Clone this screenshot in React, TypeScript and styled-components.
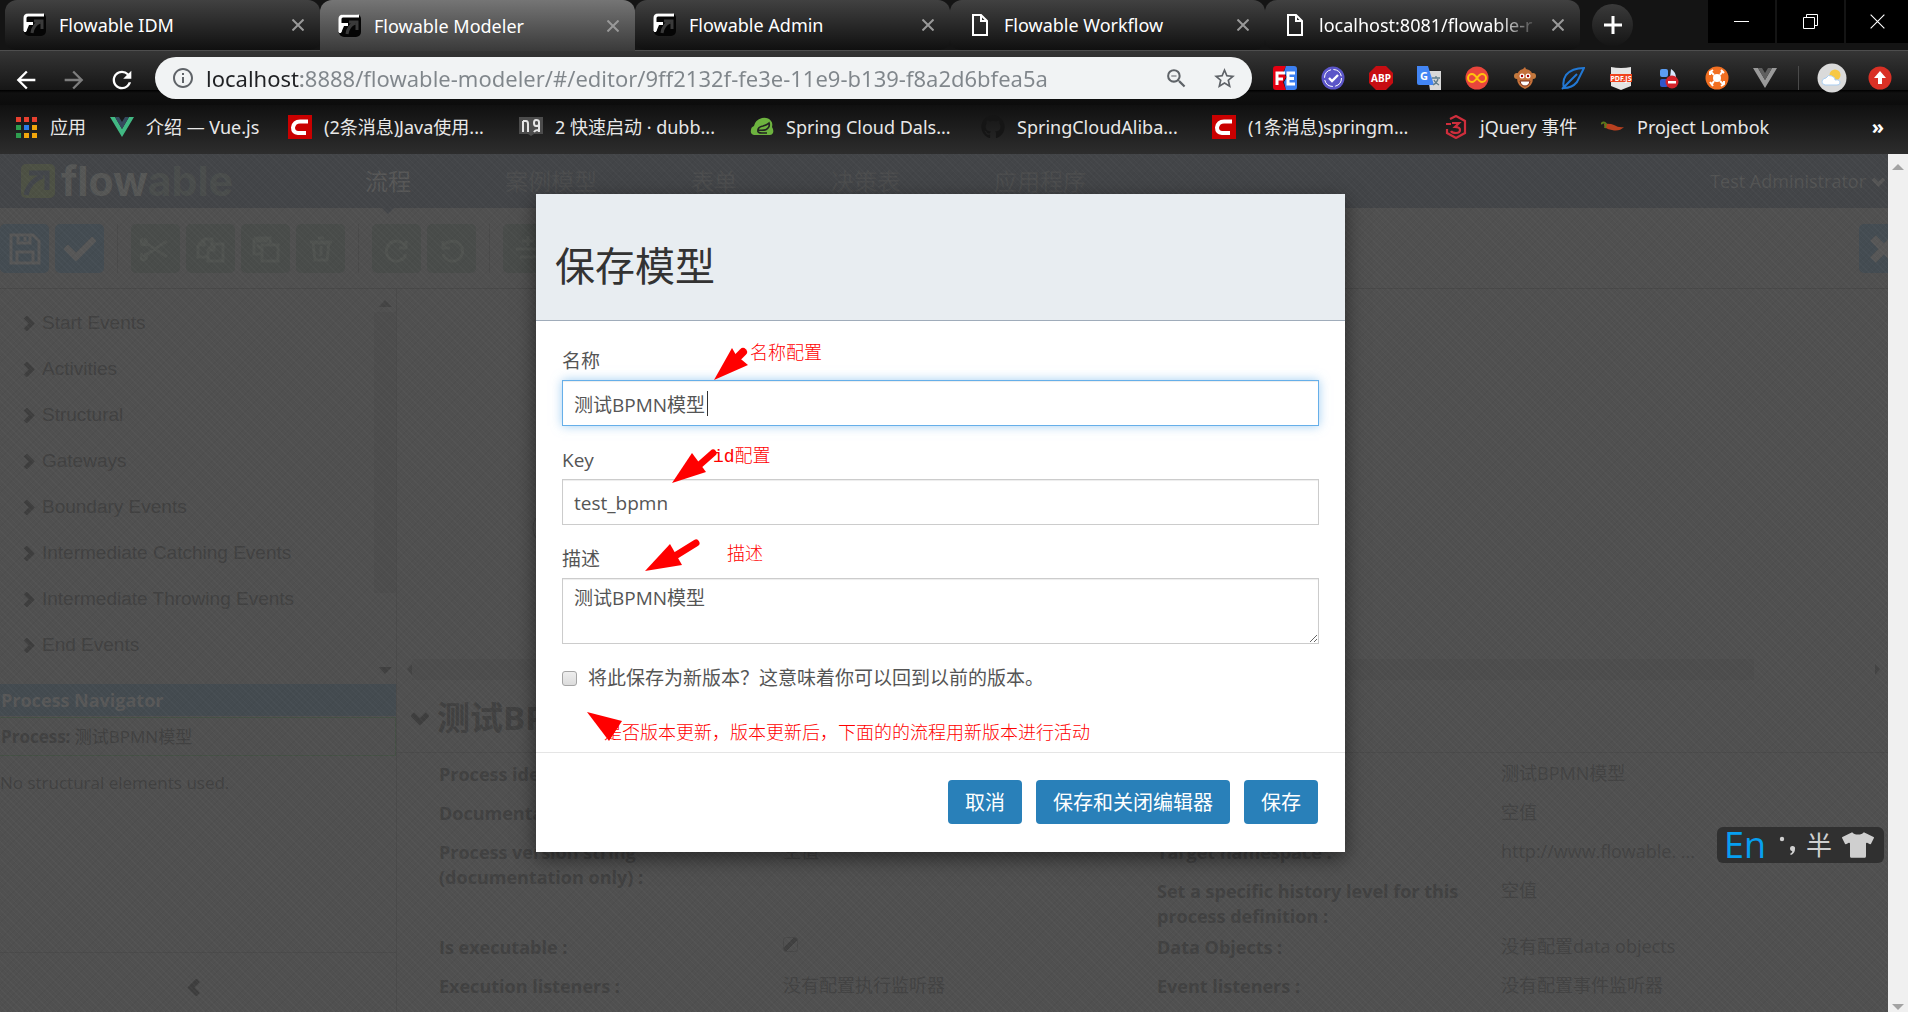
import React from "react";
import styled, { createGlobalStyle } from "styled-components";
import {
  MdArrowBack,
  MdArrowForward,
  MdRefresh,
  MdInfoOutline,
  MdZoomOut,
  MdStarBorder,
} from "react-icons/md";
import { FaGithub, FaCheck, FaTshirt } from "react-icons/fa";

const ui = `"Noto Sans", "Noto Sans CJK SC", sans-serif`;
const web = `"Open Sans", "Noto Sans CJK SC", sans-serif`;
const ink = "#414141";

const Global = createGlobalStyle`
  *, *::before, *::after { box-sizing: border-box; }
  body { margin: 0; background: #505050; overflow: hidden; }
  button, input, textarea { font: inherit; color: inherit; margin: 0; }
  button { border: 0; padding: 0; background: none; }
  a { color: inherit; text-decoration: none; }
  svg { display: block; flex: none; }
`;

const Browser = styled.div`
  display: flex;
  flex-direction: column;
  height: 100vh;
  font-family: ${ui};
`;

/* ---------- tab strip ---------- */

const TabStrip = styled.div`
  display: flex;
  height: 51px;
  padding-left: 5px;
  background: #141414;
  border-bottom: 1px solid #4e4e4e;
`;

const Tab = styled.div<{ $active?: boolean }>`
  display: flex;
  align-items: center;
  flex: 0 1 315px;
  min-width: 0;
  height: ${(p) => (p.$active ? 51 : 50)}px;
  padding: 0 16px 0 18px;
  gap: 12px;
  color: #fff;
  font-size: 18px;
  line-height: 24px;
  border-radius: ${(p) => (p.$active ? "12px 12px 0 0" : "12px 12px 10px 10px")};
  background: ${(p) =>
    p.$active
      ? "linear-gradient(#757575, #3a3a3a)"
      : "linear-gradient(#414141, #101010)"};
`;

const TabTitle = styled.span<{ $fade?: boolean }>`
  flex: 1;
  min-width: 0;
  overflow: hidden;
  white-space: nowrap;
  mask-image: ${(p) =>
    p.$fade ? "linear-gradient(90deg, #000 80%, transparent)" : "none"};
`;

const NewTab = styled.button`
  display: grid;
  place-items: center;
  width: 41px;
  height: 42px;
  margin: 4px 0 0 12px;
  border-radius: 50%;
  background: linear-gradient(#3a3a3a, #151515);
`;

const WindowButtons = styled.div`
  display: flex;
  gap: 2px;
  margin-left: auto;
`;

const WindowButton = styled.button`
  display: grid;
  place-items: center;
  width: 67px;
  height: 43px;
  background: #000;

  &:last-child { width: 62px; }
`;

/* ---------- address row ---------- */

const AddressRow = styled.div`
  display: flex;
  align-items: center;
  height: 54px;
  padding: 0 16px 0 12px;
  background: linear-gradient(#353535, #161616 39px, #000 39px, #101010 42px, #0c0c0c);
`;

const NavButton = styled.button<{ $dim?: boolean }>`
  display: grid;
  place-items: center;
  width: 24px;
  height: 24px;
  margin-right: 24px;
  color: ${(p) => (p.$dim ? "#7d7d7d" : "#fff")};
`;

const Omnibox = styled.div`
  display: flex;
  align-items: center;
  flex: 1;
  height: 42px;
  margin-right: 21px;
  margin-left: -1px;
  padding: 0 16px;
  border-radius: 21px;
  background: #f1f3f4;
  color: #5f6368;
`;

const Url = styled.input`
  flex: 1;
  min-width: 0;
  height: 32px;
  margin: 0 16px 0 11px;
  padding: 0;
  border: 0;
  outline: 0;
  font-size: 22px;
  line-height: 32px;
  color: transparent;
  background: linear-gradient(90deg, #202124 95px, #80868b 95px);
  -webkit-background-clip: text;
  background-clip: text;
`;

const OmniActions = styled.div`
  display: flex;
  gap: 24px;
`;

const IconButton = styled.button`
  display: grid;
  place-items: center;
  width: 24px;
  height: 24px;
`;

const Avatar = styled(IconButton)`
  width: 30px;
  height: 30px;
  margin: 0 -3px;
`;

const Extensions = styled.div`
  display: flex;
  align-items: center;
  gap: 24px;
`;

const Rule = styled.span`
  width: 1px;
  height: 24px;
  margin: 0 -3px;
  background: #4a4a4a;
`;

/* ---------- bookmarks ---------- */

const Bookmarks = styled.nav`
  display: flex;
  align-items: center;
  height: 49px;
  padding: 0 24px 6px 14px;
  gap: 24px;
  color: #e8e8e8;
  font-size: 18px;
  line-height: 24px;
  background: linear-gradient(#101010, #2d2d2d);
`;

const Bookmark = styled.a<{ $w: number }>`
  display: flex;
  align-items: center;
  gap: 12px;
  flex: 0 1 ${(p) => p.$w}px;
  min-width: 0;
  white-space: nowrap;
`;

const More = styled.button`
  margin-left: auto;
  font-size: 20px;
  font-weight: 700;
  line-height: 24px;
  color: #fff;
`;

/* ---------- page ---------- */

const Viewport = styled.div`
  position: relative;
  display: flex;
  flex: 1;
  min-height: 0;
  overflow: hidden;
  font-family: ${web};
`;

const Page = styled.div`
  flex: 1;
  min-width: 0;
  overflow: hidden;
  color: ${ink};
  background: #505050;
`;

const Weave = styled.div`
  position: absolute;
  inset: 0;
  pointer-events: none;
  background: repeating-linear-gradient(45deg, rgba(255, 255, 255, 0.025) 0 1px, transparent 1px 4px),
    repeating-linear-gradient(-45deg, rgba(0, 0, 0, 0.03) 0 1px, transparent 1px 4px);
`;

const ScrollTrack = styled.div`
  position: relative;
  display: flex;
  flex-direction: column;
  justify-content: space-between;
  align-items: center;
  width: 20px;
  padding: 10px 0 1px;
  background: #f0f0f0;
`;

const SiteHeader = styled.header`
  display: flex;
  align-items: center;
  height: 54px;
  padding: 0 3px 0 21px;
  background: #434548;
`;

const Brand = styled.a`
  display: flex;
  align-items: center;
  gap: 6px;
  width: 344px;
  color: #565756;
  font-family: Inter, sans-serif;
  font-size: 41px;
  font-weight: 700;
  line-height: 44px;

  span span { color: #4a4d4c; }
`;

const SiteNav = styled.nav`
  display: flex;
  gap: 94px;
  font-size: 23px;
  line-height: 54px;
`;

const SiteLink = styled.a<{ $on?: boolean }>`
  position: relative;
  white-space: nowrap;
  color: ${(p) => (p.$on ? "#575757" : "#4c4d4e")};

  &::after {
    content: "";
    display: ${(p) => (p.$on ? "block" : "none")};
    position: absolute;
    top: 54px;
    left: 17px;
    border: 6px solid transparent;
    border-top-color: #434548;
    border-bottom: 0;
  }
`;

const User = styled.button`
  display: flex;
  align-items: center;
  gap: 6px;
  margin-left: auto;
  color: #535454;
  font-size: 18px;
`;

const EditorBar = styled.div`
  display: flex;
  gap: 6px;
  height: 81px;
  padding-top: 16px;
  overflow: hidden;
  border-bottom: 1px solid #484848;
`;

const Tool = styled.button<{ $blue?: boolean }>`
  display: grid;
  place-items: center;
  flex: none;
  width: 49px;
  height: 49px;
  border-radius: 5px;
  color: ${(p) => (p.$blue ? "#575757" : "#505350")};
  background: ${(p) => (p.$blue ? "#444c52" : "#494c4a")};

  &:last-child { margin: 0 -20px 0 auto; }
`;

const ToolRule = styled.span`
  width: 1px;
  height: 49px;
  margin: 0 7px;
  background: #4a4a4a;
`;

const Workspace = styled.div`
  display: grid;
  grid-template-columns: 397px minmax(0, 1fr);
`;

const Side = styled.aside`
  border-right: 1px solid #4a4a4a;
`;

const Palette = styled.div`
  display: flex;
  justify-content: space-between;
  height: 395px;
  padding-top: 11px;
`;

const Groups = styled.ul`
  margin: 0;
  padding: 0 0 0 21px;
  list-style: none;
`;

const Group = styled.li`
  display: flex;
  align-items: center;
  gap: 6px;
  height: 46px;
  font-family: "Liberation Sans", Arial, sans-serif;
  font-size: 19px;
  white-space: nowrap;
`;

const PaletteScroll = styled.div`
  display: flex;
  flex-direction: column;
  align-items: center;
  justify-content: space-between;
  width: 22px;
  padding-bottom: 10px;
`;

const PaletteThumb = styled.div`
  flex: 1;
  width: 22px;
  margin: 5px 0 74px;
  background: #4d4d4d;
`;

const NavTitle = styled.h3`
  margin: 0 0 1px;
  padding: 0 1px;
  color: #585858;
  background: #444b50;
  font-size: 18px;
  line-height: 32px;
`;

const ProcessName = styled.div`
  padding: 1px 1px 0;
  border: 1px solid #455045;
  border-left: 0;
  font-size: 17px;
  line-height: 36px;
`;

const Empty = styled.p`
  height: 197px;
  margin: 0;
  padding-top: 15px;
  border-bottom: 1px solid #4a4a4a;
  font-size: 17px;
  line-height: 24px;
`;

const Collapse = styled.button`
  display: block;
  margin: 26px 0 0 186px;
`;

const Main = styled.main`
  min-width: 0;
`;

const Canvas = styled.div`
  display: flex;
  align-items: flex-end;
  height: 370px;
  padding: 0 0 112px 135px;
`;

const HScroll = styled.div`
  display: flex;
  align-items: center;
  justify-content: space-between;
  height: 21px;
  padding: 0 8px 0 10px;
`;

const HThumb = styled.div`
  flex: 1;
  height: 21px;
  margin: 0 121px 0 0;
  background: #4d4d4d;
`;

const ModelTitle = styled.h2`
  display: flex;
  align-items: center;
  gap: 8px;
  height: 73px;
  margin: 0 0 8px;
  padding: 3px 0 0 14px;
  border-bottom: 1px solid #4a4a4a;
  font-size: 33px;
  line-height: 40px;
`;

const Properties = styled.div`
  display: grid;
  grid-template-columns: 718px minmax(0, 1fr);
  padding-left: 42px;
`;

const PropertyList = styled.dl`
  margin: 0;
  font-size: 18px;
  line-height: 25px;
`;

const Property = styled.div<{ $h?: number }>`
  display: grid;
  grid-template-columns: 344px minmax(0, 1fr);
  height: ${(p) => p.$h || 39}px;
`;

const Term = styled.dt`
  grid-column: 1;
  padding: 1px 34px 0 0;
  font-weight: 700;
`;

const Value = styled.dd`
  grid-column: 2;
  margin: 0;
  color: #434343;
  white-space: nowrap;
`;

const PageCheck = styled.input`
  appearance: none;
  display: block;
  width: 15px;
  height: 15px;
  margin-top: 3px;
  border: 1px solid #484848;
  border-radius: 3px;
  background: linear-gradient(135deg, transparent 35%, #404040 35% 60%, transparent 60%);
`;

/* ---------- dialog ---------- */

const Overlay = styled.div`
  position: absolute;
  inset: 0;
  display: flex;
  justify-content: center;
  align-items: flex-start;
  padding: 40px 27px 0 0;
`;

const Dialog = styled.form`
  position: relative;
  width: 809px;
  background: #fff;
  box-shadow: 0 6px 19px rgba(0, 0, 0, 0.5);
  color: #555;
  font-size: 19px;
  line-height: 26px;
`;

const DialogHead = styled.div`
  height: 127px;
  padding: 47px 19px 0;
  background: #e8edf1;
  border-bottom: 1px solid #a0acba;
`;

const DialogTitle = styled.h1`
  margin: 0;
  color: #333;
  font-size: 40px;
  font-weight: 400;
  line-height: 50px;
`;

const DialogBody = styled.div`
  padding: 27px 26px 61px;
`;

const Field = styled.div`
  position: relative;
  margin-bottom: 21px;
`;

const Label = styled.label`
  display: block;
  margin-bottom: 6px;
`;

const boxed = `
  display: block;
  width: 100%;
  border: 1px solid #ccc;
  border-radius: 0;
  background: #fff;
  box-shadow: inset 0 1px 1px rgba(0, 0, 0, 0.075);
  outline: 0;
`;

const TextBox = styled.input<{ $focus?: boolean }>`
  ${boxed}
  height: 46px;
  padding: 1px 11px 0;
  ${(p) =>
    p.$focus &&
    "border-color: #66afe9; box-shadow: inset 0 1px 1px rgba(0,0,0,.075), 0 0 10px rgba(102,175,233,.6);"}
`;

const Caret = styled.span`
  position: absolute;
  bottom: 10px;
  left: 145px;
  width: 1px;
  height: 25px;
  background: #333;
`;

const TextArea = styled.textarea`
  ${boxed}
  height: 66px;
  padding: 6px 11px;
  resize: vertical;
`;

const CheckRow = styled.label`
  display: flex;
  align-items: center;
  gap: 11px;
`;

const Check = styled.input`
  appearance: none;
  width: 15px;
  height: 15px;
  border: 1px solid #a5a5a5;
  border-radius: 3px;
  background: linear-gradient(#eee, #dcdcdc);
`;

const DialogFoot = styled.div`
  display: flex;
  justify-content: flex-end;
  gap: 14px;
  padding: 27px 27px 28px;
  border-top: 1px solid #e5e5e5;
`;

const Primary = styled.button`
  height: 44px;
  padding: 2px 17px 0;
  border-radius: 4px;
  color: #fff;
  background: #2980b9;
  font-size: 20px;
`;

/* Red review marks drawn over the dialog. */
const Marks = styled.svg`
  position: absolute;
  inset: 0;
  pointer-events: none;
`;

const Note = styled.span<{ $x: number; $y: number }>`
  position: absolute;
  left: ${(p) => p.$x}px;
  top: ${(p) => p.$y}px;
  color: #f00;
  font-family: "Liberation Mono", "Noto Sans CJK SC", monospace;
  font-size: 18px;
  font-weight: 300;
  line-height: 24px;
  white-space: nowrap;
`;

const Ime = styled.div`
  position: absolute;
  right: 24px;
  bottom: 149px;
  display: flex;
  align-items: center;
  gap: 10px;
  width: 167px;
  height: 36px;
  padding: 0 10px 0 7px;
  border-radius: 6px;
  background: #303030;
  color: #cfcfcf;
  font-size: 26px;
  line-height: 36px;
`;

const ImeMode = styled.span`
  color: #079ff0;
  font-family: "Open Sans", sans-serif;
  font-size: 36px;
  line-height: 36px;
`;

/* ---------- drawings ---------- */

const FlowIcon = () => (
  <svg width="24" height="24" viewBox="0 0 24 24">
    <rect x="1" y="0" width="22" height="23" rx="5" fill="#050505" />
    <path d="M2 18V5q0-3 3-3h16" fill="none" stroke="#fff" strokeWidth="3" />
    <path d="M2 9h8v3H6l-3 7H1z" fill="#fff" />
    <path d="M9 20q1-8 8-11M11 8h8v8" fill="none" stroke="#3a3a3a" strokeWidth="3" />
  </svg>
);

const FileIcon = () => (
  <svg width="24" height="24" viewBox="0 0 24 24" fill="none" stroke="#fff" strokeWidth="2">
    <path d="M5 2h8l6 6v14H5zM13 2v6h6" />
  </svg>
);

const Cross = ({ s = 12, c = "#999", w = 2 }: { s?: number; c?: string; w?: number }) => (
  <svg width={s} height={s} viewBox="0 0 12 12" stroke={c} strokeWidth={w}>
    <path d="M0.5 0.5l11 11M11.5 0.5l-11 11" />
  </svg>
);

const Chevron = ({ turn = 0, s = 14, c = "#3e3e3e" }) => (
  <svg width={s} height={s} viewBox="0 0 14 14" fill="none" stroke={c} strokeWidth="4">
    <path d="M4 1l6 6-6 6" transform={`rotate(${turn} 7 7)`} />
  </svg>
);

const Triangle = ({ d, c, w = 13, h = 7 }: { d: string; c: string; w?: number; h?: number }) => (
  <svg width={w} height={h} viewBox={`0 0 ${w} ${h}`} fill={c}>
    <path d={d} />
  </svg>
);

const Ext = ({ children }: { children: React.ReactNode }) => (
  <IconButton type="button">
    <svg width="24" height="24" viewBox="0 0 24 24">{children}</svg>
  </IconButton>
);

const Glyph = ({ d }: { d: string }) => (
  <svg width="32" height="32" viewBox="0 0 32 32" fill="none" stroke="currentColor" strokeWidth="3">
    <path d={d} />
  </svg>
);

const letter = { fontFamily: "Noto Sans, sans-serif", fontWeight: 700, textAnchor: "middle" as const };

const CIcon = () => (
  <svg width="24" height="24" viewBox="0 0 24 24">
    <rect width="24" height="24" fill="#c90000" />
    <path d="M20 6.500H12q-6 0-7 6 0 5 5 5.500h8" fill="none" stroke="#fff" strokeWidth="4" />
  </svg>
);

const AppsIcon = () => {
  const colors = ["#e8402f", "#e8402f", "#e8402f", "#2e9e4f", "#2b7de9", "#f2a60c", "#2e9e4f", "#f2a60c", "#f2a60c"];
  return (
    <svg width="24" height="24" viewBox="0 0 24 24">
      {colors.map((c, i) => (
        <rect key={i} x={2 + (i % 3) * 8} y={2 + Math.floor(i / 3) * 8} width="5" height="5" fill={c} />
      ))}
    </svg>
  );
};

const VueIcon = () => (
  <svg width="24" height="24" viewBox="0 0 24 24">
    <path d="M0 2h5l7 12 7-12h5L12 22z" fill="#41b883" />
    <path d="M5 2h4l3 5 3-5h4l-7 12z" fill="#35495e" />
  </svg>
);

const BookIcon = () => (
  <svg width="24" height="24" viewBox="0 0 24 24">
    <path d="M0 2h24v17h-9l-3 2-3-2H0z" fill="#4c4c4c" />
    <path d="M4 6v11M4 6h3q2 0 2 3v8M20 17V7q0-2-3-2-2 0-2 3t2 3 3-1M15 17q1-2 4-2" fill="none" stroke="#e5e5e5" strokeWidth="2" />
  </svg>
);

const SpringIcon = () => (
  <svg width="24" height="24" viewBox="0 0 24 24">
    <path d="M12 3q6-1 9 3 2 2 1 6 2 3 1 6-1 2-3 2H4q-4-1-3-5 0-3 3-4 1-6 8-8z" fill="#6db33f" />
    <path d="M8 15q8 1 10-2 2-2 1-5-2 2-6 3-5 1-5 4zM8 15q-1 3 4 3h5" fill="none" stroke="#222" strokeWidth="1.600" />
  </svg>
);

const HexIcon = () => (
  <svg width="24" height="24" viewBox="0 0 24 24" fill="none" stroke="#cf2e3c" strokeWidth="2.200">
    <path d="M6 4l6-3 9 5v12l-9 5-9-5v-4" />
    <path d="M2 9h5M8 8h7l-4 4q5 0 5 3t-4 3-5-2" />
  </svg>
);

const PepperIcon = () => (
  <svg width="24" height="24" viewBox="0 0 24 24">
    <path d="M3 9q6-1 10 1 5 3 10 2-5 5-12 3Q3 14 3 9z" fill="#b8401f" />
    <path d="M0 9q3-3 5 0l-1 4" fill="none" stroke="#5d7a1c" strokeWidth="2" />
  </svg>
);

const bookmarks: [string, number, React.ReactNode][] = [
  ["应用", 72, <AppsIcon />],
  ["介绍 — Vue.js", 154, <VueIcon />],
  ["(2条消息)Java使用...", 207, <CIcon />],
  ["2 快速启动 · dubb...", 207, <BookIcon />],
  ["Spring Cloud Dals...", 207, <SpringIcon />],
  ["SpringCloudAliba...", 207, <FaGithub size={24} color="#151515" />],
  ["(1条消息)springm...", 208, <CIcon />],
  ["jQuery 事件", 133, <HexIcon />],
  ["Project Lombok", 172, <PepperIcon />],
];

const tabs = [
  { title: "Flowable IDM", icon: <FlowIcon /> },
  { title: "Flowable Modeler", icon: <FlowIcon />, active: true },
  { title: "Flowable Admin", icon: <FlowIcon /> },
  { title: "Flowable Workflow", icon: <FileIcon /> },
  { title: "localhost:8081/flowable-r", icon: <FileIcon />, fade: true },
];

const groups = [
  "Start Events",
  "Activities",
  "Structural",
  "Gateways",
  "Boundary Events",
  "Intermediate Catching Events",
  "Intermediate Throwing Events",
  "End Events",
];

const tools = {
  edit: [
    "M3 8l24 16M3 24L27 8M3 6a3 3 0 1 0 1 0M3 21a3 3 0 1 0 1 0",
    "M3 12l6-6h8v6M3 12v12h10M3 12h6V6M13 17l6-6h9v17H13zM13 17h6v-6",
    "M4 5h16v6M4 5v16h8M6 8h12M12 12h16v16H12zM7 12l5 5",
    "M8 10h16l-2 17H10zM5 9h22M13 5h6M16 13v10",
  ],
  history: ["M25 8v7h-7M24 13a10 10 0 1 0 1 8", "M7 8v7h7M8 13a10 10 0 1 1-1 8"],
};

export default function App() {
  return (
    <Browser>
      <Global />
      <TabStrip>
        {tabs.map((t) => (
          <Tab key={t.title} $active={t.active}>
            {t.icon}
            <TabTitle $fade={t.fade}>{t.title}</TabTitle>
            <button type="button" aria-label="关闭标签页">
              <Cross />
            </button>
          </Tab>
        ))}
        <NewTab type="button" aria-label="打开新的标签页">
          <svg width="18" height="18" viewBox="0 0 18 18" stroke="#fff" strokeWidth="3">
            <path d="M9 0v18M0 9h18" />
          </svg>
        </NewTab>
        <WindowButtons>
          <WindowButton type="button" aria-label="最小化">
            <svg width="15" height="2"><rect width="15" height="1" fill="#fff" /></svg>
          </WindowButton>
          <WindowButton type="button" aria-label="还原">
            <svg width="15" height="15" viewBox="0 0 15 15" fill="none" stroke="#fff">
              <path d="M0.5 3.5h11v11h-11zM3.500 3V0.500h11v11H12" />
            </svg>
          </WindowButton>
          <WindowButton type="button" aria-label="关闭">
            <Cross s={15} c="#fff" w={0.9} />
          </WindowButton>
        </WindowButtons>
      </TabStrip>

      <AddressRow>
        <NavButton type="button" aria-label="后退"><MdArrowBack size={28} /></NavButton>
        <NavButton type="button" aria-label="前进" $dim><MdArrowForward size={28} /></NavButton>
        <NavButton type="button" aria-label="刷新"><MdRefresh size={28} /></NavButton>
        <Omnibox>
          <MdInfoOutline size={24} />
          <Url
            aria-label="地址"
            defaultValue="localhost:8888/flowable-modeler/#/editor/9ff2132f-fe3e-11e9-b139-f8a2d6bfea5a"
          />
          <OmniActions>
            <IconButton type="button" aria-label="缩放"><MdZoomOut size={25} /></IconButton>
            <IconButton type="button" aria-label="收藏"><MdStarBorder size={25} /></IconButton>
          </OmniActions>
        </Omnibox>
        <Extensions>
          <Ext>
            <path d="M3 0h10l-3 6 3 5-3 5 3 8H3q-3 0-3-3V3q0-3 3-3z" fill="#e60012" />
            <path d="M13 0h8q3 0 3 3v18q0 3-3 3h-8l-2-8 3-5-3-5z" fill="#3c7ff0" />
            <path d="M4 19V7h8M4 13h6M22 7h-7v11h7M15 12.500h6" fill="none" stroke="#fff" strokeWidth="3" />
          </Ext>
          <Ext>
            <circle cx="12" cy="12" r="11.500" fill="#5b55c8" />
            <circle cx="12" cy="12" r="8.500" fill="none" stroke="#fff" strokeDasharray="11 2.400" />
            <path d="M8 12l3 3 6-6" fill="none" stroke="#fff" strokeWidth="2.400" />
          </Ext>
          <Ext>
            <path d="M7 0h10l7 7v10l-7 7H7l-7-7V7z" fill="#c70d12" />
            <text x="12" y="16" fontSize="10" fill="#fff" {...letter}>ABP</text>
          </Ext>
          <Ext>
            <path d="M10 5h14v19H13z" fill="#d8d8d8" />
            <path d="M0 0h11l6 19H2q-2 0-2-2z" fill="#4285f4" />
            <path d="M15 12h8M19 10v2M21 13q-1 4-5 6M17 14q1 3 5 5" fill="none" stroke="#607d8b" strokeWidth="1.300" />
            <text x="7" y="14" fontSize="11" fill="#fff" {...letter}>G</text>
          </Ext>
          <Ext>
            <circle cx="12" cy="12" r="11.500" fill="#e8453c" />
            <path d="M12 12c-2-3-3-4-5-4a4 4 0 0 0 0 8c2 0 3-1 5-4s3-4 5-4a4 4 0 0 1 0 8c-2 0-3-1-5-4z" fill="none" stroke="#ffc20e" strokeWidth="2" />
          </Ext>
          <Ext>
            <circle cx="4" cy="10" r="3" fill="#c47a3d" />
            <circle cx="20" cy="10" r="3" fill="#c47a3d" />
            <path d="M10 3l2-2 1 2q7 1 7 9t-8 11Q4 20 4 12t6-9z" fill="#c4713a" />
            <circle cx="9" cy="10" r="2.500" fill="#fff" />
            <circle cx="15" cy="10" r="2.500" fill="#fff" />
            <circle cx="9" cy="10" r="1.200" fill="#a00" />
            <circle cx="15" cy="10" r="1.200" fill="#a00" />
            <path d="M7 15h10q-1 5-5 5t-5-5z" fill="#fff" stroke="#7a2a14" />
          </Ext>
          <Ext>
            <path d="M23 2Q11 2 5 9q-4 6-2 13 8 0 13-6 3-6 7-14zM1 23l6-6L16 8" fill="none" stroke="#2278d4" strokeWidth="2" />
          </Ext>
          <Ext>
            <path d="M2 1q10 2 20 0v19l-10 4-10-4z" fill="#e4e4e4" />
            <rect x="1" y="8" width="22" height="8" fill="#f0441f" />
            <text x="12" y="15" fontSize="7" fill="#fff" {...letter}>PDF.JS</text>
          </Ext>
          <Ext>
            <rect x="3" y="3" width="8" height="8" rx="2" fill="#5b9cf0" />
            <rect x="3" y="13" width="8" height="8" rx="2" fill="#3156c8" />
            <path d="M14 3q5 3 5 9h-6z" fill="#d8e8ff" />
            <circle cx="15" cy="16" r="6.500" fill="#d3222a" />
            <rect x="11" y="15" width="8" height="2.500" fill="#fff" />
          </Ext>
          <Ext>
            <circle cx="12" cy="12" r="11.500" fill="#f26f21" />
            <circle cx="12" cy="12" r="4" fill="#fff" />
            <path d="M9 9L6 6M15 9l2-3M9 15l-2 3M15 15l3 3M5 9V6l3-2M16 4l3 3M5 16l3 4M19 15v3l-3 2" fill="none" stroke="#fff" strokeWidth="2" />
          </Ext>
          <Ext>
            <path d="M0 2h5l7 12 7-12h5L12 22z" fill="#9a9a9a" />
            <path d="M5 2h4l3 5 3-5h4l-7 12z" fill="#5f5f5f" />
          </Ext>
          <Rule />
          <Avatar type="button" aria-label="用户">
            <svg width="30" height="30" viewBox="0 0 30 30">
              <circle cx="15" cy="15" r="14.500" fill="#dadada" />
              <circle cx="18" cy="12" r="5.500" fill="#f7c843" />
              <path d="M8 22q-4-1-3-4t4-3q2-4 6-2t3 4q5-1 5 3 0 2-3 2z" fill="#fff" stroke="#a9cdf0" />
            </svg>
          </Avatar>
          <Ext>
            <circle cx="12" cy="12" r="11.500" fill="#d93025" />
            <path d="M12 5l6 7h-4v6h-4v-6H6z" fill="#fff" />
          </Ext>
        </Extensions>
      </AddressRow>

      <Bookmarks>
        {bookmarks.map(([name, w, icon]) => (
          <Bookmark key={name} href="#" $w={w}>
            {icon}
            {name}
          </Bookmark>
        ))}
        <More type="button">»</More>
      </Bookmarks>

      <Viewport>
        <Page>
          <SiteHeader>
            <Brand href="#">
              <svg width="34" height="34" viewBox="0 0 34 34">
                <rect width="34" height="34" rx="5" fill="#4d5144" />
                <path d="M5 31Q8 17 22 12M8 9h18v17" fill="none" stroke="#43464a" strokeWidth="5" />
              </svg>
              <span>flow<span>able</span></span>
            </Brand>
            <SiteNav>
              <SiteLink href="#" $on>流程</SiteLink>
              <SiteLink href="#">案例模型</SiteLink>
              <SiteLink href="#">表单</SiteLink>
              <SiteLink href="#">决策表</SiteLink>
              <SiteLink href="#">应用程序</SiteLink>
            </SiteNav>
            <User type="button">
              Test Administrator
              <Chevron turn={90} s={13} c="#555" />
            </User>
          </SiteHeader>

          <EditorBar>
            <Tool type="button" $blue aria-label="保存">
              <Glyph d="M2 2h22l6 6v22H2zM8 30V19h16v11M9 2v8h12V2M16 4v4" />
            </Tool>
            <Tool type="button" $blue aria-label="校验"><FaCheck size={32} /></Tool>
            <ToolRule />
            {tools.edit.map((d) => (
              <Tool key={d} type="button"><Glyph d={d} /></Tool>
            ))}
            <ToolRule />
            {tools.history.map((d) => (
              <Tool key={d} type="button"><Glyph d={d} /></Tool>
            ))}
            <ToolRule />
            <Tool type="button"><Glyph d="M16 3v10M10 8h12M4 16h24M8 24h16" /></Tool>
            <Tool type="button" $blue aria-label="关闭编辑器">
              <svg width="30" height="30" viewBox="0 0 30 30" stroke="currentColor" strokeWidth="8">
                <path d="M4 4l22 22M26 4L4 26" />
              </svg>
            </Tool>
          </EditorBar>

          <Workspace>
            <Side>
              <Palette>
                <Groups>
                  {groups.map((g) => (
                    <Group key={g}>
                      <Chevron s={15} />
                      {g}
                    </Group>
                  ))}
                </Groups>
                <PaletteScroll>
                  <Triangle d="M0 7L6 0l7 7z" c="#444" />
                  <PaletteThumb />
                  <Triangle d="M0 0h13L6 7z" c="#404040" />
                </PaletteScroll>
              </Palette>
              <NavTitle>Process Navigator</NavTitle>
              <ProcessName>
                <b>Process:</b> 测试BPMN模型
              </ProcessName>
              <Empty>No structural elements used.</Empty>
              <Collapse type="button" aria-label="收起">
                <Chevron turn={180} s={17} />
              </Collapse>
            </Side>

            <Main>
              <Canvas>
                <svg width="38" height="38" viewBox="0 0 38 38">
                  <circle cx="19" cy="19" r="18" fill="none" stroke="#444" />
                </svg>
              </Canvas>
              <HScroll>
                <Triangle d="M5 0v11L0 5z" c="#444" w={5} h={11} />
                <HThumb />
                <Triangle d="M0 0v11l5-6z" c="#444" w={5} h={11} />
              </HScroll>
              <ModelTitle>
                <Chevron turn={90} s={18} />
                测试BPMN模型
              </ModelTitle>
              <Properties>
                <PropertyList>
                  <Property><Term>Process identifier :</Term></Property>
                  <Property><Term>Documentation :</Term></Property>
                  <Property $h={95}>
                    <Term>Process version string (documentation only) :</Term>
                    <Value>空值</Value>
                  </Property>
                  <Property>
                    <Term>Is executable :</Term>
                    <Value><PageCheck type="checkbox" defaultChecked aria-label="Is executable" /></Value>
                  </Property>
                  <Property>
                    <Term>Execution listeners :</Term>
                    <Value>没有配置执行监听器</Value>
                  </Property>
                </PropertyList>
                <PropertyList>
                  <Property><Value>测试BPMN模型</Value></Property>
                  <Property><Value>空值</Value></Property>
                  <Property><Term>Target namespace :</Term><Value>http://www.flowable. ...</Value></Property>
                  <Property $h={56}>
                    <Term>Set a specific history level for this process definition :</Term>
                    <Value>空值</Value>
                  </Property>
                  <Property><Term>Data Objects :</Term><Value>没有配置data objects</Value></Property>
                  <Property><Term>Event listeners :</Term><Value>没有配置事件监听器</Value></Property>
                </PropertyList>
              </Properties>
            </Main>
          </Workspace>
        </Page>

        <Weave />
        <ScrollTrack>
          <Triangle d="M0 6L6 0l6 6z" c="#a3a3a3" />
          <Triangle d="M0 0h12L6 6z" c="#a3a3a3" />
        </ScrollTrack>

        <Overlay>
          <Dialog>
            <DialogHead>
              <DialogTitle>保存模型</DialogTitle>
            </DialogHead>
            <DialogBody>
              <Field>
                <Label htmlFor="name">名称</Label>
                <TextBox id="name" $focus defaultValue="测试BPMN模型" />
                <Caret />
              </Field>
              <Field>
                <Label htmlFor="key">Key</Label>
                <TextBox id="key" defaultValue="test_bpmn" />
              </Field>
              <Field>
                <Label htmlFor="description">描述</Label>
                <TextArea id="description" defaultValue="测试BPMN模型" />
              </Field>
              <CheckRow>
                <Check type="checkbox" />
                将此保存为新版本？这意味着你可以回到以前的版本。
              </CheckRow>
            </DialogBody>
            <DialogFoot>
              <Primary type="button">取消</Primary>
              <Primary type="button">保存和关闭编辑器</Primary>
              <Primary type="button">保存</Primary>
            </DialogFoot>

            <Note $x={214} $y={148}>名称配置</Note>
            <Note $x={177} $y={251}>id配置</Note>
            <Note $x={191} $y={349}>描述</Note>
            <Note $x={68} $y={528}>是否版本更新，版本更新后，下面的的流程用新版本进行活动</Note>
            <Marks width="809" height="658" viewBox="536 194 809 658" fill="#f00" stroke="#f00">
              <path d="M743 352L735 360" strokeWidth="8" strokeLinecap="round" />
              <path d="M714 380L732 348 736 355 742 360 748 365z" stroke="none" />
              <path d="M713 453L696 468" strokeWidth="7" strokeLinecap="round" />
              <path d="M672 483L692 453 706 472z" stroke="none" />
              <path d="M696 543L675 556" strokeWidth="7" strokeLinecap="round" />
              <path d="M645 571L670 544 682 565z" stroke="none" />
              <path d="M587 712L622 721 609 741z" stroke="none" />
            </Marks>
          </Dialog>
        </Overlay>

        <Ime>
          <ImeMode>En</ImeMode>
          <svg width="20" height="24" viewBox="0 0 20 24" fill="#cfcfcf">
            <circle cx="6" cy="6" r="2.200" />
            <path d="M14 15a2.500 2.500 0 1 1 5 1q0 4-4 6l-1-1q3-2 2-3-2 0-2-3z" />
          </svg>
          半
          <FaTshirt size={32} />
        </Ime>
      </Viewport>
    </Browser>
  );
}
